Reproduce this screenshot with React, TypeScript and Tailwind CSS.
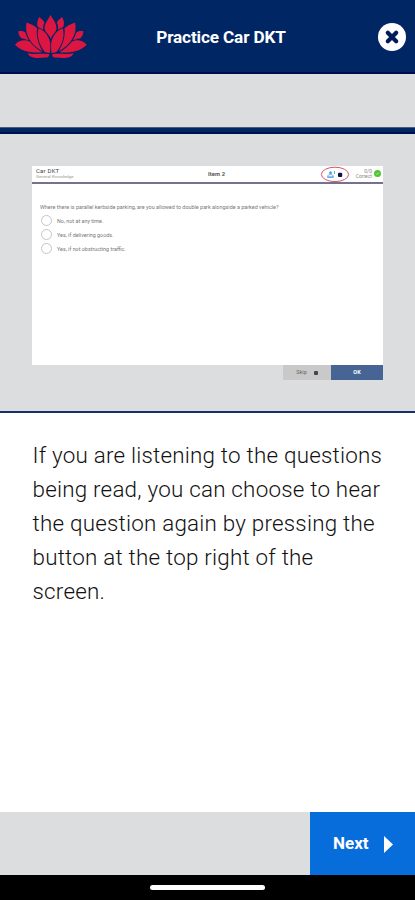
import React from "react";

function Waratah() {
  return (
    <svg className="h-[44px] w-[72px]" viewBox="45 44 217 132" fill="#dc1640" aria-hidden="true">
      <path d="M152 44C158 55 171 69 170 85C169 96 158 102 153 115C147 102 135 96 134 84C134 69 146 57 152 44Z" />
      <path d="M118 50C124 54 132 62 134 67C130 73 130 80 130 88L113 79C110 68 114 57 118 50Z" />
      <path d="M187 50C181 54 173 62 171 67C175 73 175 80 175 88L191 79C195 68 191 57 187 50Z" />
      <path d="M80 66C92 70 106 77 112 84C108 104 113 128 128 153C107 143 86 122 80 96C78 85 78 76 80 66Z" />
      <path d="M226 66C214 70 200 77 194 84C197 104 192 128 177 153C198 143 219 122 226 96C228 85 228 76 226 66Z" />
      <path d="M116 84C132 90 148 106 151 129C152 139 151 150 150 158C143 158 136 156 133 153C116 130 110 105 116 84Z" />
      <path d="M189 84C173 90 157 106 154 129C153 139 154 150 155 158C162 158 169 156 172 153C189 130 195 105 189 84Z" />
      <path d="M55 93C63 90 71 92 77 97C79 106 83 113 87 120L64 114C57 107 55 100 55 93Z" />
      <path d="M251 93C243 90 235 92 229 97C227 106 223 113 219 120L242 114C249 107 251 100 251 93Z" />
      <path d="M45 133C58 119 76 117 90 124C100 137 112 147 127 156C99 158 65 155 45 133Z" />
      <path d="M261 133C248 119 230 117 216 124C206 137 194 147 179 156C207 158 241 155 261 133Z" />
      <path d="M83 159C102 164 125 158 148 162C149 168 143 173 137 172C119 173 92 178 83 159Z" />
      <path d="M222 159C203 164 181 158 157 162C156 168 162 173 168 172C186 173 213 178 222 159Z" />
    </svg>
  );
}

function Header() {
  return (
    <header className="grid h-[74px] shrink-0 grid-cols-[1fr_auto_1fr] items-center border-b-2 border-[#000b51] bg-[#002664] pl-[15px] pr-[9px] pt-[2px] text-white">
      <Waratah />
      <h1 className="pl-[21px] text-[17.2px] font-bold leading-6 tracking-[-0.15px]">Practice Car DKT</h1>
      <button className="justify-self-end" aria-label="Close">
        <svg className="block size-[28px]" viewBox="0 0 28 28">
          <circle cx="14" cy="14" r="14" fill="#fff" />
          <path d="M9.8 9.8 18.2 18.2M18.2 9.8 9.8 18.2" stroke="#001b58" strokeWidth="4.2" strokeLinecap="round" />
        </svg>
      </button>
    </header>
  );
}

const answers = ["No, not at any time.", "Yes, if delivering goods.", "Yes, if not obstructing traffic."];

function QuestionPreview() {
  return (
    <section className="h-[279px] shrink-0 border-b-2 border-[#17306b] bg-[#dcdddf] px-8 pt-[32px]">
      <div className="h-[199px] w-[351px] bg-white text-[#777]">
        <div className="grid h-[18px] grid-cols-[1fr_auto_1fr] border-b-2 border-[#74728c]">
          <div className="pl-1 pt-[1px]">
            <div className="text-[6px] leading-[7px] tracking-[0.2px] text-[#444]">Car DKT</div>
            <div className="text-[4.4px] leading-[6px] text-[#999]">General Knowledge</div>
          </div>
          <div className="pl-[18px] pt-[4px] text-[5.8px] font-bold leading-[8px] tracking-[0.1px] text-[#555]">Item 2</div>
          <div className="flex justify-end pr-[2px]">
            <svg className="-mt-px mr-[6px] h-[18px] w-[30px] overflow-visible" viewBox="0 0 30 18" fill="none">
              <ellipse cx="15" cy="9.4" rx="13.6" ry="7.2" stroke="#d9536b" />
              <circle cx="10.5" cy="7.7" r="1.5" fill="#55a5df" />
              <path d="M7.5 11.8c0-3 6-3 6 0zM14.5 6v3M7.5 12.5h6" stroke="#55a5df" strokeWidth=".9" />
              <rect x="18" y="7.8" width="4.2" height="4.2" rx="1" fill="#130f4a" />
            </svg>
            <div className="mr-[2px] pt-[3px] text-right text-[5px] leading-[5px] text-[#888]">
              <div>0/0</div>
              <div>Correct</div>
            </div>
            <svg className="mt-[4px] size-[7px]" viewBox="0 0 7 7">
              <circle cx="3.5" cy="3.5" r="3.5" fill="#50c52c" />
              <path d="m2 3.5 1 1 2-2" fill="none" stroke="#c9f3bc" strokeWidth=".8" />
            </svg>
          </div>
        </div>
        <p className="whitespace-nowrap pl-2 pt-[19px] text-[5.45px] leading-[8px]">
          Where there is parallel kerbside parking, are you allowed to double park alongside a parked vehicle?
        </p>
        <ul className="pl-[9px] pt-[2px]">
          {answers.map((answer) => (
            <li key={answer} className="flex h-[14px] items-center gap-[5px] text-[5.4px] leading-[8px]">
              <span className="size-[11px] rounded-full border border-[#c5c5c5]" />
              <span className="pt-[2px]">{answer}</span>
            </li>
          ))}
        </ul>
      </div>
      <div className="flex h-[15px] w-[351px] justify-end">
        <div className="flex w-[48px] items-center justify-center gap-[7px] bg-[#c9c9c9] text-[5.5px] text-[#666]">
          <span>Skip</span>
          <span className="size-[4px] rounded-[1px] bg-[#444]" />
        </div>
        <div className="flex w-[52px] items-center justify-center bg-[#466594] text-[5.5px] font-bold text-white">OK</div>
      </div>
    </section>
  );
}

export default function App() {
  return (
    <div className="flex h-[900px] w-[415px] flex-col overflow-hidden bg-white font-['Roboto',sans-serif]">
      <Header />
      <div className="h-[53px] shrink-0 bg-[#dcddde]" />
      <div className="h-[7px] shrink-0 border-b-2 border-t border-b-[#000b51] border-t-[#4c5c80] bg-[#002664]" />
      <QuestionPreview />
      <main className="grow pl-[32.5px] pt-[25px] text-[22.4px] font-[350] leading-[34px] tracking-[0.22px] text-[#111]">
        <p className="whitespace-nowrap">
          If you are listening to the questions<br />
          being read, you can choose to hear<br />
          the question again by pressing the<br />
          button at the top right of the<br />
          screen.
        </p>
      </main>
      <footer className="flex h-[63px] shrink-0 justify-end bg-[#dcddde]">
        <button className="flex w-[105px] items-center bg-[#066dda] pl-[23px] text-[17px] font-bold text-white">
          <span>Next</span>
          <svg className="ml-[15px] mt-[2px] h-[17px] w-[9px]" viewBox="0 0 9 17" fill="currentColor" aria-hidden="true">
            <path d="M0 0 9 8.5 0 17Z" />
          </svg>
        </button>
      </footer>
      <div className="flex h-[25px] shrink-0 justify-center bg-black pt-[10px]">
        <div className="h-[5px] w-[115px] rounded-full bg-white" />
      </div>
    </div>
  );
}
